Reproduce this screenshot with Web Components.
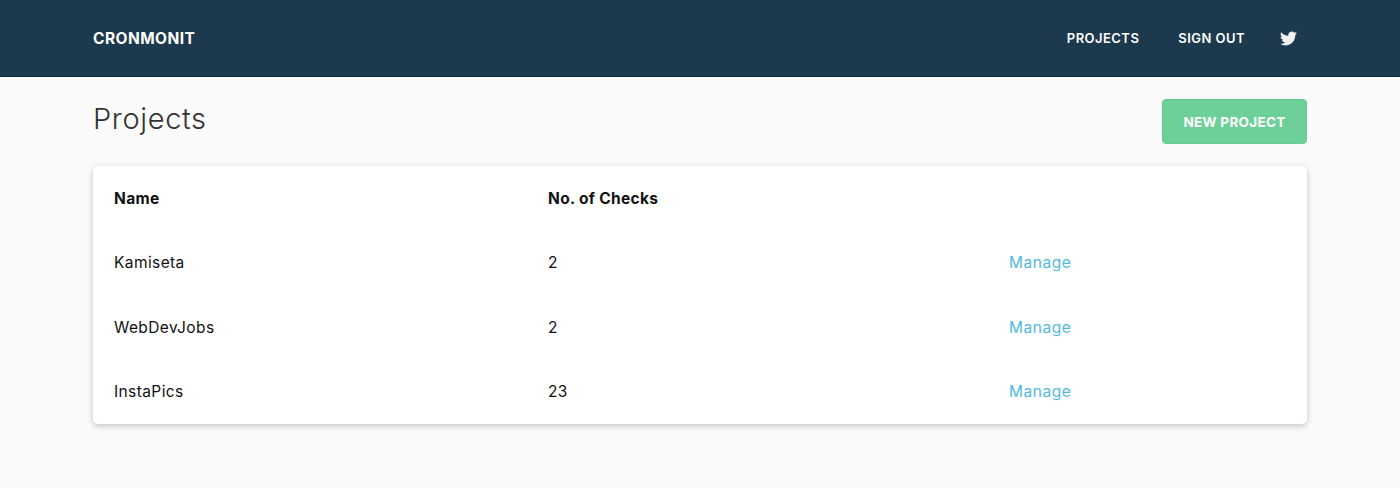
<!DOCTYPE html>
<html>
<head>
<meta charset="utf-8">
<title>Cronmonit</title>
<style>
  html, body { margin: 0; padding: 0; }
  body { background: #fafafa; font-family: Inter, "Liberation Sans", sans-serif; color: #111; }
</style>
</head>
<body>
<cm-header>
  <cm-nav-link slot="links">PROJECTS</cm-nav-link>
  <cm-nav-link slot="links">SIGN OUT</cm-nav-link>
</cm-header>
<cm-page>
  <cm-page-head title="Projects" action="NEW PROJECT"></cm-page-head>
  <cm-card>
    <cm-row head name="Name" checks="No. of Checks"></cm-row>
    <cm-row name="Kamiseta" checks="2"></cm-row>
    <cm-row name="WebDevJobs" checks="2"></cm-row>
    <cm-row name="InstaPics" checks="23"></cm-row>
  </cm-card>
</cm-page>

<script>
const html = String.raw;

class CmHeader extends HTMLElement {
  connectedCallback() {
    this.attachShadow({ mode: 'open' }).innerHTML = html`
      <style>
        :host { display: block; background: #1c394e; border-bottom: 1px solid #0f2536; height: 77px; box-sizing: border-box; }
        .bar { display: flex; align-items: center; height: 76px; padding: 0 103px 0 93px; }
        .logo { font-size: 15.5px; font-weight: 700; letter-spacing: .45px; color: #fff; }
        .links { margin-left: auto; display: flex; align-items: center; gap: 39px; }
        svg { display: block; width: 17px; height: 17px; fill: #f1f1f1; margin-left: -4px; }
      </style>
      <div class="bar">
        <div class="logo">CRONMONIT</div>
        <div class="links">
          <slot name="links"></slot>
          <svg viewBox="0 0 24 24"><path d="M23.953 4.57a10 10 0 01-2.825.775 4.958 4.958 0 002.163-2.723c-.951.555-2.005.959-3.127 1.184a4.92 4.92 0 00-8.384 4.482C7.69 8.095 4.067 6.13 1.64 3.162a4.822 4.822 0 00-.666 2.475c0 1.71.87 3.213 2.188 4.096a4.904 4.904 0 01-2.228-.616v.06a4.923 4.923 0 003.946 4.827 4.996 4.996 0 01-2.212.085 4.936 4.936 0 004.604 3.417 9.867 9.867 0 01-6.102 2.105c-.39 0-.779-.023-1.17-.067a13.995 13.995 0 007.557 2.209c9.053 0 13.998-7.496 13.998-13.985 0-.21 0-.42-.015-.63A9.935 9.935 0 0024 4.59z"/></svg>
        </div>
      </div>
    `;
  }
}

class CmNavLink extends HTMLElement {
  connectedCallback() {
    this.attachShadow({ mode: 'open' }).innerHTML = html`
      <style>:host { display: block; font-size: 13px; font-weight: 600; letter-spacing: .45px; color: #fff; }</style>
      <slot></slot>
    `;
  }
}

class CmPage extends HTMLElement {
  connectedCallback() {
    this.attachShadow({ mode: 'open' }).innerHTML = html`
      <style>:host { display: block; padding: 22px 93px 64px; }</style>
      <slot></slot>
    `;
  }
}

class CmPageHead extends HTMLElement {
  connectedCallback() {
    this.attachShadow({ mode: 'open' }).innerHTML = html`
      <style>
        :host { display: flex; justify-content: space-between; align-items: flex-start; height: 67px; }
        h1 { margin: 0; font-size: 29px; line-height: 40px; font-weight: 300; letter-spacing: .65px; color: #333; }
        button {
          width: 145px; height: 45px; border: 1px solid #66cb92; border-radius: 4px; padding: 0;
          background: #6dd098; color: #fff; font: 700 13.5px Inter, "Liberation Sans", sans-serif; letter-spacing: .3px;
        }
      </style>
      <h1>${this.getAttribute('title')}</h1>
      <button>${this.getAttribute('action')}</button>
    `;
  }
}

class CmCard extends HTMLElement {
  connectedCallback() {
    this.attachShadow({ mode: 'open' }).innerHTML = html`
      <style>
        :host { display: block; background: #fff; border-radius: 5px; box-shadow: 0 2px 6px rgba(0,0,0,.22); }
      </style>
      <slot></slot>
    `;
  }
}

class CmRow extends HTMLElement {
  connectedCallback() {
    const head = this.hasAttribute('head');
    this.attachShadow({ mode: 'open' }).innerHTML = html`
      <style>
        :host { display: grid; grid-template-columns: 434px 461px 1fr; align-items: center; height: 64.5px; padding-left: 21px; font-size: 15.5px; letter-spacing: .4px; color: #111; }
        :host([head]) { font-weight: 700; letter-spacing: .32px; }
        a { color: #52b9de; text-decoration: none; letter-spacing: .55px; }
      </style>
      <div>${this.getAttribute('name')}</div>
      <div>${this.getAttribute('checks')}</div>
      <div>${head ? '' : '<a href="#">Manage</a>'}</div>
    `;
  }
}

customElements.define('cm-header', CmHeader);
customElements.define('cm-nav-link', CmNavLink);
customElements.define('cm-page', CmPage);
customElements.define('cm-page-head', CmPageHead);
customElements.define('cm-card', CmCard);
customElements.define('cm-row', CmRow);
</script>
</body>
</html>
